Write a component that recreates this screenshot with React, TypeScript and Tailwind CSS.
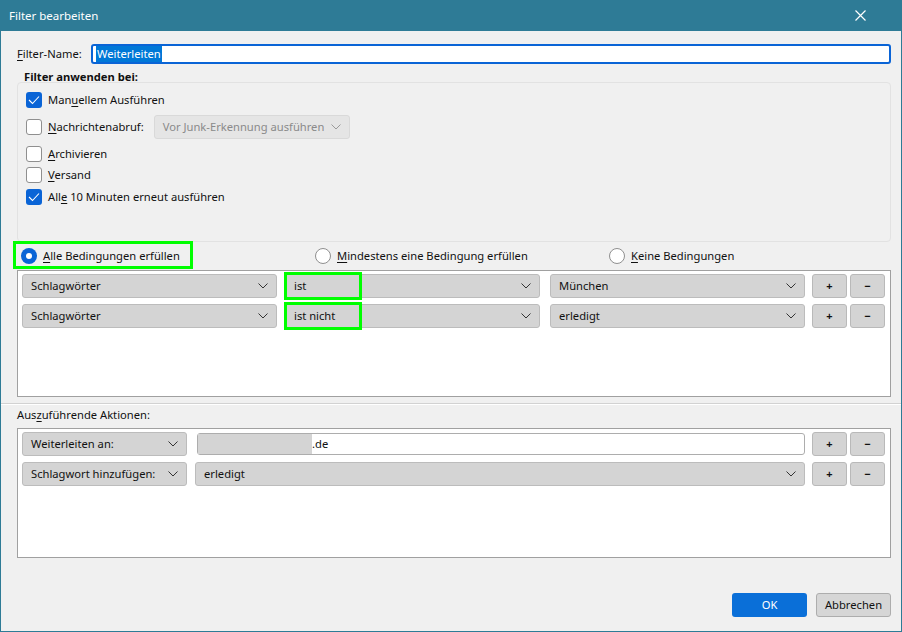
import React from 'react';

const font = { fontFamily: '"Noto Sans", "Open Sans", sans-serif' };

function Chevron({ className = '' }: { className?: string }) {
  return (
    <svg width="10" height="6" viewBox="0 0 10 6" className={className}>
      <path d="M0.5 0.5 L5 5 L9.5 0.5" fill="none" stroke="currentColor" strokeWidth="1" />
    </svg>
  );
}

function Key({ children }: { children: React.ReactNode }) {
  return <span className="underline underline-offset-2 decoration-1">{children}</span>;
}

function Checkbox({ checked }: { checked?: boolean }) {
  if (checked) {
    return (
      <span className="flex h-4 w-4 shrink-0 items-center justify-center rounded-[3px] bg-[#0a64d6]">
        <svg width="12" height="10" viewBox="0 0 12 10">
          <path d="M1 5 L4.5 8.5 L11 1.5" fill="none" stroke="#fff" strokeWidth="1.1" />
        </svg>
      </span>
    );
  }
  return <span className="h-4 w-4 shrink-0 rounded-[3px] border border-[#8f8f8f] bg-white" />;
}

function Radio({ checked }: { checked?: boolean }) {
  if (checked) {
    return (
      <span className="flex h-4 w-4 shrink-0 items-center justify-center rounded-full bg-[#0a64d6]">
        <span className="h-1.5 w-1.5 rounded-full bg-white" />
      </span>
    );
  }
  return <span className="h-4 w-4 shrink-0 rounded-full border border-[#8f8f8f] bg-white" />;
}

function Select({ label, className = '' }: { label: string; className?: string }) {
  return (
    <div
      className={
        'flex h-6 items-center justify-between whitespace-nowrap rounded-[3px] border border-[#bcbcbc] bg-[#d4d4d4] pl-2 pr-2 text-[#111] ' +
        className
      }
    >
      <span>{label}</span>
      <Chevron className="text-[#333]" />
    </div>
  );
}

function PlusMinus() {
  return (
    <div className="flex gap-[3px]">
      <button className="flex h-6 w-[35px] items-center justify-center rounded-[3px] border border-[#b9b9b9] bg-[#d4d4d4] text-[11px] font-bold text-[#111]">
        +
      </button>
      <button className="flex h-6 w-[35px] items-center justify-center rounded-[3px] border border-[#b9b9b9] bg-[#d4d4d4] text-[11px] font-bold text-[#111]">
        −
      </button>
    </div>
  );
}

export default function App() {
  return (
    <div style={font} className="flex h-[632px] w-[902px] flex-col bg-[#f0f0f0] text-[11.2px] text-[#111]">
      {/* title bar */}
      <div className="flex h-[31px] shrink-0 items-center justify-between bg-[#2e7b96] pl-[9px] pr-[36px] text-white">
        <span className="text-[11.5px]">Filter bearbeiten</span>
        <svg width="11" height="11" viewBox="0 0 11 11">
          <path d="M0.5 0.5 L10.5 10.5 M10.5 0.5 L0.5 10.5" stroke="#fff" strokeWidth="1.2" />
        </svg>
      </div>

      <div className="flex flex-1 flex-col border-x border-b border-[#2e7b96]">
        <div className="flex flex-col pl-4 pr-[10px]">
          {/* filter name */}
          <div className="mt-[13px] flex h-5 items-center">
            <span className="w-[74px]">
              <Key>F</Key>ilter-Name:
            </span>
            <div className="flex h-5 flex-1 items-center rounded-[3px] border-2 border-[#0a64d6] bg-white pl-[3px]">
              <span className="bg-[#0078d7] px-[1px] leading-[16px] text-white">Weiterleiten</span>
            </div>
          </div>

          {/* filter anwenden bei */}
          <div className="mt-[6px] pl-[7px] font-bold leading-[14px]">Filter anwenden bei:</div>
          <div className="-mt-[2px] flex h-[160px] flex-col rounded-[4px] border border-[#e2e2e2] pl-[8px] pr-2 pt-[9px]">
            <div className="flex h-4 items-center gap-[6px]">
              <Checkbox checked />
              <span>
                Man<Key>u</Key>ellem Ausführen
              </span>
            </div>
            <div className="mt-[7px] flex h-6 items-center gap-[6px]">
              <Checkbox />
              <span>
                <Key>N</Key>achrichtenabruf:
              </span>
              <div className="ml-[4px] flex h-6 w-[196px] items-center justify-between whitespace-nowrap rounded-[3px] border border-[#d9d9d9] bg-[#e5e5e5] pl-2 pr-2 text-[#8a8a8a]">
                <span>Vor Junk-Erkennung ausführen</span>
                <Chevron className="text-[#9a9a9a]" />
              </div>
            </div>
            <div className="mt-[7px] flex h-4 items-center gap-[6px]">
              <Checkbox />
              <span>
                <Key>A</Key>rchivieren
              </span>
            </div>
            <div className="mt-[5px] flex h-4 items-center gap-[6px]">
              <Checkbox />
              <span>
                <Key>V</Key>ersand
              </span>
            </div>
            <div className="mt-[6px] flex h-4 items-center gap-[6px]">
              <Checkbox checked />
              <span>
                All<Key>e</Key> 10 Minuten erneut ausführen
              </span>
            </div>
          </div>

          {/* radios */}
          <div className="-ml-[4px] -mt-[1px] flex h-[28px] items-center">
            <div className="flex h-[28px] w-[180px] items-center gap-[6px] border-[3px] border-[#00ff00] pl-[5px] pt-[2px]">
              <Radio checked />
              <span>
                <Key>A</Key>lle Bedingungen erfüllen
              </span>
            </div>
            <div className="ml-[122px] flex w-[294px] items-center gap-[6px] pt-[2px]">
              <Radio />
              <span>
                <Key>M</Key>indestens eine Bedingung erfüllen
              </span>
            </div>
            <div className="flex items-center gap-[6px] pt-[2px]">
              <Radio />
              <span>
                <Key>K</Key>eine Bedingungen
              </span>
            </div>
          </div>

          {/* conditions */}
          <div className="mt-[1px] flex h-[127px] flex-col gap-[6px] border border-[#a0a0a0] bg-white pl-1 pr-1 pt-[3px]">
            {[
              ['Schlagwörter', 'ist', 'München'],
              ['Schlagwörter', 'ist nicht', 'erledigt'],
            ].map((r, i) => (
              <div key={i} className="flex items-center">
                <Select label={r[0]} className="w-[255px]" />
                <div className="relative ml-[8px] w-[255px]">
                  <Select label={r[1]} />
                  <div className="absolute -left-px -top-[2px] h-[28px] w-[78px] border-[3px] border-[#00ff00]" />
                </div>
                <Select label={r[2]} className="ml-[10px] w-[255px]" />
                <div className="ml-[7px]">
                  <PlusMinus />
                </div>
              </div>
            ))}
          </div>
        </div>

        {/* separator */}
        <div className="mt-[6px] h-[2px] border-t border-[#d2d2d2] bg-white" />

        <div className="flex flex-1 flex-col pl-4 pr-[10px] pb-[14px]">
          <div className="mt-[2px] leading-[16px]">
            Aus<Key>z</Key>uführende Aktionen:
          </div>
          <div className="mt-[5px] flex h-[130px] flex-col gap-[6px] border border-[#a0a0a0] bg-white pl-1 pr-1 pt-[3px]">
            <div className="flex items-center">
              <Select label="Weiterleiten an:" className="w-[165px]" />
              <div className="ml-[10px] flex h-[22px] w-[608px] items-center rounded-[3px] border border-[#adadad] bg-white">
                <span className="h-[20px] w-[114px] bg-[#d4d4d4]" />
                <span>.de</span>
              </div>
              <div className="ml-[7px]">
                <PlusMinus />
              </div>
            </div>
            <div className="flex items-center">
              <Select label="Schlagwort hinzufügen:" className="w-[165px]" />
              <Select label="erledigt" className="ml-[8px] w-[610px]" />
              <div className="ml-[7px]">
                <PlusMinus />
              </div>
            </div>
          </div>

          <div className="mt-auto flex justify-end gap-[9px]">
            <button className="flex h-6 w-[75px] items-center justify-center rounded-[3px] bg-[#0a6fd8] text-white">
              OK
            </button>
            <button className="flex h-6 w-[75px] items-center justify-center rounded-[3px] border border-[#adadad] bg-[#d6d6d6]">
              Abbrechen
            </button>
          </div>
        </div>
      </div>
    </div>
  );
}
